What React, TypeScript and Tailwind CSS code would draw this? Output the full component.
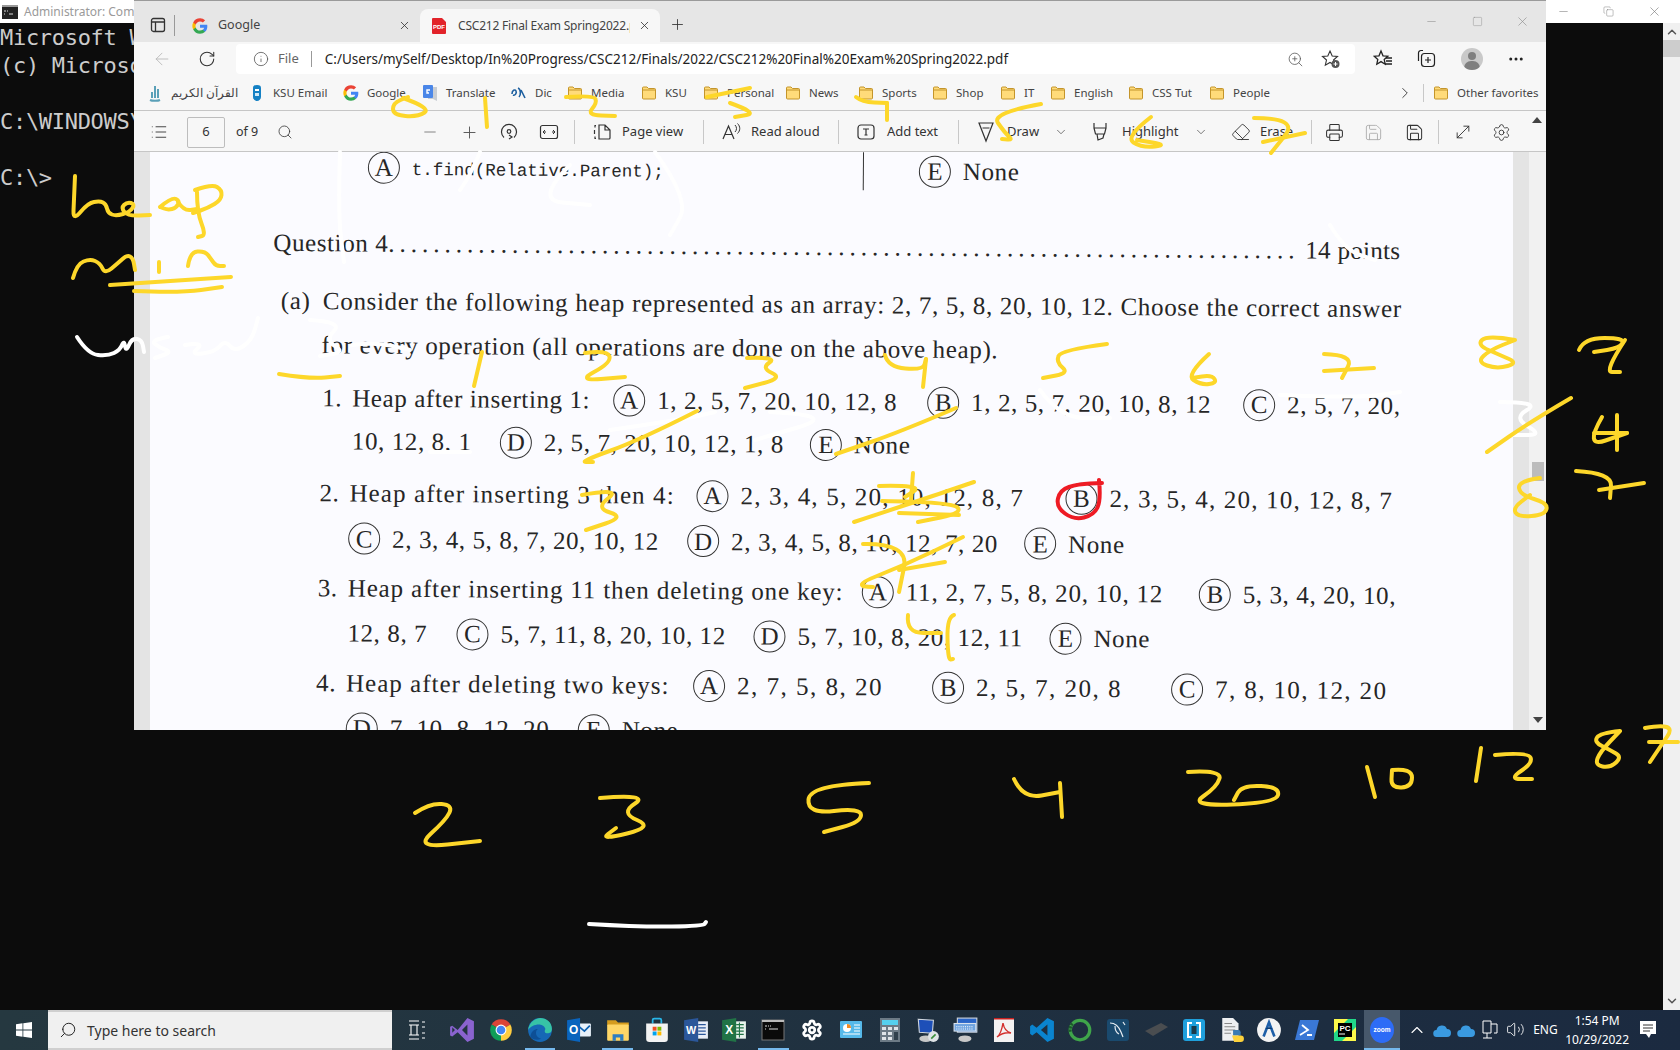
import type { ReactNode } from 'react';
import {
  ArrowLeft,
  ChevronDown,
  ChevronRight,
  ChevronUp,
  Copy,
  Ellipsis,
  Eraser,
  Info,
  List,
  Minus,
  MoveDiagonal,
  Plus,
  Printer,
  RotateCw,
  Save,
  Search,
  Settings,
  Square,
  Volume2,
  X,
  ZoomIn,
} from 'lucide-react';

type Pt = [number, number];

// handwriting on the shared screen, in page coordinates
const yellowStrokes: Pt[][] = [
  // heap
  [[75, 176], [74, 200], [73, 221], [88, 203], [100, 201], [106, 204], [108, 213], [116, 216], [130, 212], [135, 204], [127, 202], [121, 208], [128, 216], [150, 215]],
  [[160, 207], [172, 197], [180, 201], [176, 208], [168, 210], [160, 207]],
  [[178, 202], [184, 211], [197, 209]],
  [[195, 190], [212, 184], [222, 190], [221, 200], [208, 208], [193, 213]],
  [[197, 192], [197, 212], [206, 235], [198, 237]],
  // min
  [[73, 278], [77, 264], [90, 259], [100, 263], [105, 274], [118, 263], [127, 255], [133, 258], [135, 270]],
  [[159, 262], [159, 272]],
  [[188, 266], [190, 252], [205, 251], [211, 259], [216, 266], [224, 266]],
  [[110, 285], [170, 281], [231, 277]],
  [[134, 291], [180, 293], [222, 287]],
  [[279, 374], [310, 379], [340, 376]],
  // 0 to 7 over the toolbar
  [[403, 98], [431, 108], [418, 117], [393, 115], [393, 103], [408, 97]],
  [[485, 98], [487, 127]],
  [[566, 97], [594, 95], [597, 103], [587, 115], [615, 116]],
  [[707, 97], [750, 88]],
  [[730, 103], [758, 113], [735, 117]],
  [[856, 97], [862, 102], [887, 103]],
  [[887, 103], [887, 120]],
  [[1041, 104], [991, 113], [1005, 133], [1013, 140], [1002, 139]],
  [[1151, 117], [1125, 137], [1142, 148], [1168, 145], [1137, 140]],
  [[1254, 118], [1299, 118], [1271, 153]],
  [[1263, 142], [1305, 133]],
  // 1 to 9 above the list
  [[482, 352], [474, 386]],
  [[585, 353], [608, 350], [611, 363], [577, 381], [625, 377]],
  [[747, 358], [778, 357], [761, 368], [783, 378], [745, 388]],
  [[885, 355], [888, 367], [923, 370], [926, 359]],
  [[926, 359], [923, 387]],
  [[1107, 344], [1061, 350], [1056, 362], [1069, 373], [1043, 378]],
  [[1209, 354], [1186, 375], [1201, 385], [1217, 383], [1212, 375], [1192, 378]],
  [[1324, 354], [1354, 355], [1342, 378]],
  [[1324, 371], [1374, 368]],
  [[1515, 340], [1487, 335], [1477, 345], [1500, 355], [1518, 363], [1497, 369], [1477, 362], [1490, 350], [1515, 340]],
  [[1579, 350], [1584, 338], [1625, 338], [1620, 348], [1594, 352]],
  [[1625, 340], [1604, 372], [1620, 372]],
  // strikes
  [[1571, 398], [1530, 422], [1487, 452]],
  [[1602, 417], [1584, 448], [1627, 433]],
  [[1594, 433], [1627, 433]],
  [[1617, 415], [1617, 450]],
  [[1540, 478], [1518, 481], [1520, 495], [1548, 503], [1545, 515], [1518, 517], [1513, 508], [1530, 495]],
  [[1576, 471], [1612, 473], [1610, 498]],
  [[1599, 490], [1644, 483]],
  [[697, 411], [640, 440], [579, 462], [593, 462]],
  [[956, 408], [900, 432], [836, 454]],
  [[582, 495], [622, 488], [595, 508], [625, 517], [586, 530]],
  [[879, 486], [923, 485], [905, 497]],
  [[913, 473], [911, 500]],
  [[854, 522], [915, 502], [974, 482]],
  [[882, 501], [952, 502], [963, 513], [918, 522]],
  [[899, 513], [959, 515]],
  [[863, 544], [909, 543], [899, 592]],
  [[873, 587], [849, 587], [905, 565], [963, 537]],
  [[899, 570], [945, 562]],
  [[908, 615], [906, 633], [941, 633]],
  [[954, 615], [947, 617], [948, 660], [953, 659]],
  // numbers on the black part
  [[415, 813], [430, 803], [453, 805], [446, 820], [415, 848], [480, 841]],
  [[600, 798], [650, 794], [620, 813], [654, 827], [600, 840], [616, 828]],
  [[869, 783], [810, 785], [807, 814], [861, 808], [861, 822], [824, 832]],
  [[1014, 779], [1023, 799], [1060, 792]],
  [[1060, 783], [1062, 817]],
  [[1188, 772], [1222, 770], [1217, 787], [1189, 806], [1276, 803], [1280, 787], [1242, 785], [1234, 800]],
  [[1367, 767], [1375, 797]],
  [[1392, 770], [1412, 768], [1412, 787], [1391, 788], [1392, 770]],
  [[1481, 748], [1476, 781]],
  [[1495, 755], [1528, 752], [1533, 763], [1509, 779], [1532, 779]],
  [[1620, 731], [1600, 733], [1594, 742], [1610, 750], [1622, 757], [1610, 768], [1595, 765], [1600, 752], [1620, 731]],
  [[1645, 728], [1677, 722], [1658, 750], [1650, 762]],
  [[1649, 742], [1678, 742]],
];

const whiteStrokes: Pt[][] = [
  [[77, 337], [88, 354], [108, 356], [120, 350], [124, 340], [126, 352], [132, 338], [142, 340], [144, 352]],
  [[168, 337], [150, 340], [160, 348], [172, 352], [155, 358]],
  [[185, 345], [205, 342], [190, 355], [215, 352], [225, 340], [235, 352], [252, 340], [258, 318]],
  [[310, 320], [343, 322], [325, 340], [345, 352], [320, 356]],
  [[589, 924], [640, 927], [703, 926], [706, 922]],
  [[1500, 402], [1541, 402], [1513, 418], [1543, 435], [1513, 435]],
  // faint strokes that rub out bits of the print
  [[340, 152], [338, 215], [344, 262]],
  [[480, 152], [470, 175], [460, 190]],
  [[570, 165], [535, 200], [590, 205]],
  [[655, 152], [690, 200], [670, 235]],
  [[1330, 225], [1345, 250], [1375, 260]],
  [[352, 345], [375, 342], [410, 350]],
  [[430, 452], [470, 452]],
  [[610, 430], [680, 420], [715, 412]],
  [[770, 412], [840, 415], [755, 440]],
  [[1040, 390], [1060, 418], [1110, 418]],
  [[1280, 395], [1360, 398], [1400, 392]],
];

// midpoint smoothing so the polylines read as pen strokes
function smooth(pts: Pt[]) {
  let d = `M${pts[0][0]} ${pts[0][1]}`;
  for (let i = 1; i < pts.length - 1; i++) {
    const mx = (pts[i][0] + pts[i + 1][0]) / 2;
    const my = (pts[i][1] + pts[i + 1][1]) / 2;
    d += ` Q${pts[i][0]} ${pts[i][1]} ${mx} ${my}`;
  }
  const last = pts[pts.length - 1];
  return `${d} L${last[0]} ${last[1]}`;
}

function GoogleG({ size = 16 }: { size?: number }) {
  return (
    <svg width={size} height={size} viewBox="0 0 24 24" className="shrink-0">
      <path fill="#4285f4" d="M23 12.3c0-.8-.1-1.6-.2-2.3H12v4.5h6.2a5.3 5.3 0 0 1-2.3 3.4v2.9h3.7c2.2-2 3.4-5 3.4-8.5z" />
      <path fill="#34a853" d="M12 23.5c3.1 0 5.7-1 7.6-2.8l-3.7-2.9c-1 .7-2.3 1.1-3.9 1.1-3 0-5.5-2-6.4-4.7H1.8v3A11.500 11.500 0 0 0 12 23.500z" />
      <path fill="#fbbc05" d="M5.600 14.200a7 7 0 0 1 0-4.400v-3H1.800a11.500 11.500 0 0 0 0 10.400z" />
      <path fill="#ea4335" d="M12 5.100c1.700 0 3.200.6 4.400 1.700l3.300-3.300A11 11 0 0 0 12 .5 11.500 11.500 0 0 0 1.800 6.800l3.800 3c.9-2.700 3.400-4.700 6.400-4.700z" />
    </svg>
  );
}

function Folder() {
  return (
    <svg width="16" height="16" viewBox="0 0 16 16" className="shrink-0">
      <path d="M1.500 3a1 1 0 0 1 1-1h3.500l1.500 1.500h6a1 1 0 0 1 1 1v8.500a1 1 0 0 1-1 1h-11a1 1 0 0 1-1-1z" fill="#ffdb7a" stroke="#c4952b" />
      <path d="M1.500 5h13" stroke="#c4952b" />
    </svg>
  );
}

const bookmarks: { label: string; className: string; icon: ReactNode }[] = [
  {
    label: 'القرآن الكريم',
    className: 'w-[102px]',
    icon: (
      <svg width="16" height="18" viewBox="0 0 16 18">
        <path d="M3 16c2 1 8 1 10 0M8 2v12M11 5v9M5 8v6" stroke="#5aa0b8" strokeWidth="2" fill="none" />
      </svg>
    ),
  },
  {
    label: 'KSU Email',
    className: 'w-[94px]',
    icon: (
      <svg width="16" height="18" viewBox="0 0 16 18">
        <path d="M8 1c3 0 4 1 4 3v9c0 2-2 4-4 4s-4-2-4-4V4c0-2 1-3 4-3z" fill="#1581c4" />
        <rect x="6" y="5" width="4" height="2" fill="#fff" />
        <rect x="6" y="9" width="4" height="3" fill="#cfe8f7" />
      </svg>
    ),
  },
  { label: 'Google', className: 'w-[79px]', icon: <GoogleG /> },
  {
    label: 'Translate',
    className: 'w-[88px]',
    icon: (
      <svg width="16" height="18" viewBox="0 0 16 18">
        <path d="M6 3h9v14l-4-2H6z" fill="#c8cdd3" />
        <rect x="1" y="1" width="10" height="13" rx="1" fill="#4a86e8" />
        <path d="M8 6H5v3h2" stroke="#fff" fill="none" strokeWidth="1.400" />
      </svg>
    ),
  },
  {
    label: 'Dic',
    className: 'w-[57px]',
    icon: (
      <svg width="17" height="16" viewBox="0 0 17 16">
        <path d="M2 9c0-4 3-5 4-3s-1 5-3 4M8 3c3 1 3 7 1 9M11 5l4 8" stroke="#1d5f9f" strokeWidth="1.600" fill="none" />
      </svg>
    ),
  },
  { label: 'Media', className: 'w-[74px]', icon: <Folder /> },
  { label: 'KSU', className: 'w-[62px]', icon: <Folder /> },
  { label: 'Personal', className: 'w-[82px]', icon: <Folder /> },
  { label: 'News', className: 'w-[73px]', icon: <Folder /> },
  { label: 'Sports', className: 'w-[74px]', icon: <Folder /> },
  { label: 'Shop', className: 'w-[68px]', icon: <Folder /> },
  { label: 'IT', className: 'w-[50px]', icon: <Folder /> },
  { label: 'English', className: 'w-[78px]', icon: <Folder /> },
  { label: 'CSS Tut', className: 'w-[81px]', icon: <Folder /> },
  { label: 'People', className: 'w-[187px]', icon: <Folder /> },
];

const thin = 'text-[#333] shrink-0';

function Divider({ className }: { className: string }) {
  return <div className={`w-px h-[24px] bg-[#c8c8c8] shrink-0 ${className}`} />;
}

function TopTabs() {
  return (
    <div className="flex h-[41px] bg-[#e6e6e6] shrink-0">
      <svg width="16" height="16" viewBox="0 0 16 16" className="ml-[16px] mt-[16px] shrink-0">
        <rect x="1.500" y="1.500" width="13" height="13" rx="2" fill="none" stroke="#333" strokeWidth="1.300" />
        <path d="M1.500 5h13M5.500 5v9.500" stroke="#333" strokeWidth="1.300" />
      </svg>
      <div className="w-px h-[21px] bg-[#999] ml-[8px] mt-[14px]" />
      <div className="flex items-center w-[245px] pl-[17px] mt-[8px] h-[33px]">
        <GoogleG />
        <span className="ml-[10px] text-[12.500px] text-[#444]">Google</span>
        <X size={13} strokeWidth={1.500} className="text-[#333] ml-auto mr-[9px]" />
      </div>
      <div className="flex items-center w-[240px] h-[33px] mt-[8px] pl-[11px] bg-[#f7f7f7] rounded-t-lg">
        <svg width="16" height="18" viewBox="0 0 16 18" className="shrink-0">
          <path d="M1 2a1 1 0 0 1 1-1h9l4 4v11a1 1 0 0 1-1 1H2a1 1 0 0 1-1-1z" fill="#e2232a" />
          <text x="8" y="12" textAnchor="middle" fontSize="6" fontWeight="700" fill="#fff" fontFamily="Liberation Sans, sans-serif">PDF</text>
        </svg>
        <span className="ml-[11px] w-[172px] text-[12px] tracking-[-0.2px] text-[#444] whitespace-nowrap overflow-hidden">CSC212 Final Exam Spring2022.pdf</span>
        <X size={13} strokeWidth={1.500} className="text-[#333] ml-[8px]" />
      </div>
      <Plus size={17} strokeWidth={1.200} className="text-[#333] ml-[9px] mt-[15px]" />
      <Minus size={13} strokeWidth={1} className="text-[#8a8a8a] ml-[739px] mt-[14px]" />
      <Square size={11} strokeWidth={1} className="text-[#8a8a8a] ml-[34px] mt-[15px]" />
      <X size={15} strokeWidth={1} className="text-[#8a8a8a] ml-[32px] mt-[13px]" />
    </div>
  );
}

function AddressRow() {
  return (
    <div className="flex items-center h-[34px] bg-[#f7f7f7] shrink-0">
      <ArrowLeft size={20} strokeWidth={1} className="text-[#b5b5b5] ml-[18px] shrink-0" />
      <RotateCw size={18} strokeWidth={1.400} className={`${thin} ml-[26px]`} />
      <div className="flex items-center w-[1119px] h-[30px] ml-[20px] bg-white rounded-[4px] text-[14px] shrink-0">
        <Info size={16} strokeWidth={1.200} className="text-[#555] ml-[17px] shrink-0" />
        <span className="ml-[9px] text-[#666] text-[13px]">File</span>
        <div className="w-px h-[16px] bg-[#999] ml-[12px]" />
        <span className="ml-[13px] text-[#222] text-[13.500px] whitespace-nowrap">C:/Users/mySelf/Desktop/In%20Progress/CSC212/Finals/2022/CSC212%20Final%20Exam%20Spring2022.pdf</span>
        <ZoomIn size={17} strokeWidth={1.100} className="text-[#555] ml-auto shrink-0" />
        <svg width="20" height="20" viewBox="0 0 20 20" className="ml-[17px] mr-[14px] shrink-0">
          <path d="M9 2l2.200 5 5.300.5-4 3.500 1.200 5.200L9 13.500l-4.700 2.700L5.500 11l-4-3.500L6.800 7z" fill="none" stroke="#333" strokeWidth="1.100" />
          <circle cx="14.500" cy="15" r="4" fill="#555" />
          <path d="M14.500 13v4M12.500 15h4" stroke="#fff" />
        </svg>
      </div>
      <svg width="20" height="20" viewBox="0 0 20 20" className="ml-[18px] shrink-0">
        <path d="M8 2l2 4.800 4.800.4-3.600 3.200 1 4.800L8 12.600l-4.200 2.600 1-4.800L1.200 7.200 6 6.800z" fill="none" stroke="#222" strokeWidth="1.300" />
        <path d="M13 9h6M13 12h6M12 15h7" stroke="#222" strokeWidth="1.300" />
      </svg>
      <svg width="20" height="20" viewBox="0 0 20 20" className="ml-[24px] shrink-0">
        <path d="M6 1.500H4A2.500 2.500 0 0 0 1.500 4v8" fill="none" stroke="#222" strokeWidth="1.200" />
        <rect x="4.500" y="4.500" width="13" height="13" rx="3" fill="none" stroke="#222" strokeWidth="1.200" />
        <path d="M11 8v6M8 11h6" stroke="#222" strokeWidth="1.200" />
      </svg>
      <div className="w-[22px] h-[22px] rounded-full bg-[#c9c9c9] ml-[24px] shrink-0 flex flex-col items-center overflow-hidden">
        <div className="w-[8px] h-[8px] rounded-full bg-[#7f7f7f] mt-[4px] shrink-0" />
        <div className="w-[16px] h-[14px] rounded-full bg-[#7f7f7f] mt-[1px] shrink-0" />
      </div>
      <Ellipsis size={18} strokeWidth={2} className="text-[#222] ml-[24px] shrink-0" />
    </div>
  );
}

function BookmarkRow() {
  return (
    <div className="flex items-center h-[35px] pl-[13px] bg-[#f7f7f7] border-b border-[#c6c6c6] shrink-0 text-[11.500px] text-[#444]">
      {bookmarks.map((b) => (
        <div key={b.label} className={`flex items-center shrink-0 gap-[8px] ${b.className}`}>
          {b.icon}
          <span className="whitespace-nowrap">{b.label}</span>
        </div>
      ))}
      <ChevronRight size={18} strokeWidth={1.200} className="text-[#333] shrink-0" />
      <div className="w-px h-[18px] bg-[#c8c8c8] ml-[9px] shrink-0" />
      <div className="flex items-center gap-[8px] ml-[9px] shrink-0">
        <Folder />
        <span className="whitespace-nowrap">Other favorites</span>
      </div>
    </div>
  );
}

function PdfToolbar() {
  const label = 'text-[13px] text-[#333] whitespace-nowrap shrink-0';
  const icon = 'text-[#333] shrink-0';
  return (
    <div className="flex items-center h-[41px] pl-[16px] pt-[2px] bg-[#f7f7f7] border-b border-[#c6c6c6] shrink-0">
      <List size={18} strokeWidth={1.200} className={icon} />
      <div className="flex items-center justify-center w-[38px] h-[31px] ml-[19px] border border-[#bdbdbd] rounded-[2px] text-[13px] text-[#333] shrink-0">6</div>
      <span className="ml-[11px] w-[30px] text-[12.500px] text-[#333] shrink-0">of 9</span>
      <Search size={16} strokeWidth={1.200} className={`${icon} ml-[11px]`} />
      <Minus size={18} strokeWidth={1.200} className="text-[#777] shrink-0 ml-[128px]" />
      <Plus size={19} strokeWidth={1.200} className="text-[#555] shrink-0 ml-[21px]" />
      <svg width="20" height="20" viewBox="0 0 20 20" className="ml-[20px] shrink-0">
        <path d="M15 15.500A7.500 7.500 0 1 0 5 15.500" fill="none" stroke="#333" strokeWidth="1.200" />
        <path d="M10 17l3-2-3-2" fill="none" stroke="#333" strokeWidth="1.200" />
        <circle cx="10" cy="9.500" r="1.800" fill="none" stroke="#333" strokeWidth="1.200" />
      </svg>
      <svg width="20" height="16" viewBox="0 0 20 16" className="ml-[20px] shrink-0">
        <rect x="1.500" y="1.500" width="17" height="13" rx="2" fill="none" stroke="#333" strokeWidth="1.200" />
        <path d="M4 8h3M13 8h3M6 6L4 8l2 2M14 6l2 2-2 2" fill="none" stroke="#333" />
      </svg>
      <Divider className="ml-[15px]" />
      <svg width="20" height="20" viewBox="0 0 20 20" className="ml-[17px] shrink-0">
        <path d="M7 3h6l5 5v8a1 1 0 0 1-1 1H7zM13 3v5h5M4 3.500H3v2M2.500 8v4M3 14.500V16.500h1" fill="none" stroke="#333" strokeWidth="1.200" />
      </svg>
      <span className={`${label} ml-[10px] w-[62px]`}>Page view</span>
      <Divider className="ml-[19px]" />
      <svg width="20" height="20" viewBox="0 0 20 20" className="ml-[17px] shrink-0">
        <path d="M2 17L7.500 4 13 17M4 12.500h7" fill="none" stroke="#333" strokeWidth="1.200" />
        <path d="M14 3c2 2 2 5 0 7M16.500 1.500c3 3 3 7 0 10" fill="none" stroke="#333" />
      </svg>
      <span className={`${label} ml-[10px] w-[69px]`}>Read aloud</span>
      <Divider className="ml-[18px]" />
      <svg width="20" height="20" viewBox="0 0 20 20" className="ml-[17px] shrink-0">
        <rect x="2" y="3" width="16" height="14" rx="3" fill="none" stroke="#333" strokeWidth="1.200" />
        <path d="M7 7h6M10 7v6M8.500 13h3" fill="none" stroke="#333" strokeWidth="1.200" />
      </svg>
      <span className={`${label} ml-[11px] w-[52px]`}>Add text</span>
      <Divider className="ml-[19px]" />
      <svg width="20" height="22" viewBox="0 0 20 22" className="ml-[17px] shrink-0">
        <path d="M3 2h14L10 20zM6.500 7h7" fill="none" stroke="#333" strokeWidth="1.200" />
      </svg>
      <span className={`${label} ml-[11px] w-[31px]`}>Draw</span>
      <ChevronDown size={14} strokeWidth={1.100} className={`${icon} ml-[16px]`} />
      <svg width="20" height="22" viewBox="0 0 20 22" className="ml-[22px] shrink-0">
        <path d="M4 2v5h12V2M4 7l1.500 6h9L16 7M7 13l1 6 5-2 1-4" fill="none" stroke="#333" strokeWidth="1.200" />
      </svg>
      <span className={`${label} ml-[12px] w-[56px]`}>Highlight</span>
      <ChevronDown size={14} strokeWidth={1.100} className={`${icon} ml-[16px]`} />
      <Eraser size={20} strokeWidth={1.100} className={`${icon} ml-[23px]`} />
      <span className={`${label} ml-[9px] w-[32px]`}>Erase</span>
      <Divider className="ml-[19px]" />
      <Printer size={19} strokeWidth={1.300} className={`${icon} ml-[13px]`} />
      <Save size={19} strokeWidth={1.100} className="text-[#aaa] shrink-0 ml-[20px]" />
      <Save size={19} strokeWidth={1.300} className={`${icon} ml-[22px]`} />
      <Divider className="ml-[14px]" />
      <MoveDiagonal size={20} strokeWidth={1.100} className={`${icon} ml-[14px]`} />
      <Settings size={19} strokeWidth={1.100} className={`${icon} ml-[19px]`} />
      <svg width="10" height="6" viewBox="0 0 10 6" className="ml-[21px] -mt-[24px] shrink-0">
        <path d="M5 0l5 6H0z" fill="#444" />
      </svg>
    </div>
  );
}

function Circled({ c, className = '' }: { c: string; className?: string }) {
  return (
    <span className={`flex items-center justify-center w-[32px] h-[32px] rounded-full border border-[#333] tracking-normal shrink-0 ${className}`}>{c}</span>
  );
}

function Opt({ c, text, className = '', textClass = '' }: { c: string; text: string; className?: string; textClass?: string }) {
  return (
    <div className={`flex items-center shrink-0 ${className}`}>
      <Circled c={c} />
      <span className={`ml-[12px] whitespace-nowrap ${textClass}`}>{text}</span>
    </div>
  );
}

function Row({ className, children }: { className: string; children: ReactNode }) {
  return <div className={`flex items-center h-[40px] shrink-0 whitespace-nowrap ${className}`}>{children}</div>;
}

function ExamPage() {
  return (
    <div className="flex-1 overflow-hidden bg-[#fbfbff]">
      <div className="flex flex-col origin-top-left rotate-[0.42deg] w-[1380px] text-[25px] tracking-[0.6px] text-[#262626] font-['Liberation_Serif',serif]">
        <Row className="-mt-[6.500px] pl-[218px]">
          <Circled c="A" />
          <span className="ml-[12px] mt-[6px] text-[17.500px] tracking-normal font-['Liberation_Mono',monospace]">t.find(Relative.Parent);</span>
          <div className="w-px h-[38px] bg-[#333] ml-[199px]" />
          <Opt c="E" text="None" className="ml-[55px]" />
        </Row>
        <Row className="mt-[36.500px] pl-[124px]">
          <span>Question 4</span>
          <span className="w-[911px] overflow-hidden tracking-[5px]">{'.'.repeat(90)}</span>
          <span className="ml-[6px] tracking-[0.3px]">14 points</span>
        </Row>
        <Row className="mt-[18px] pl-[132px]">
          <span className="w-[42px]">(a)</span>
          <span className="tracking-[0.675px]">Consider the following heap represented as an array: 2, 7, 5, 8, 20, 10, 12. Choose the correct answer</span>
        </Row>
        <Row className="mt-[3.500px] pl-[173px] tracking-[0.650px]">for every operation (all operations are done on the above heap).</Row>
        <Row className="mt-[13px] pl-[174px]">
          <span className="w-[30px]">1.</span>
          <span className="w-[261px]">Heap after inserting 1:</span>
          <Opt c="A" text="1, 2, 5, 7, 20, 10, 12, 8" className="w-[314px]" />
          <Opt c="B" text="1, 2, 5, 7, 20, 10, 8, 12" className="w-[316px]" />
          <Opt c="C" text="2, 5, 7, 20," />
        </Row>
        <Row className="mt-[3.500px] pl-[204px]">
          <span className="w-[148px]">10, 12, 8, 1</span>
          <Opt c="D" text="2, 5, 7, 20, 10, 12, 1, 8" className="w-[310px]" />
          <Opt c="E" text="None" />
        </Row>
        <Row className="mt-[12px] pl-[172px]">
          <span className="w-[30px]">2.</span>
          <span className="w-[347px] tracking-[1.100px]">Heap after inserting 3 then 4:</span>
          <Opt c="A" text="2, 3, 4, 5, 20, 10, 12, 8, 7" className="w-[369px]" textClass="tracking-[1.200px]" />
          <Opt c="B" text="2, 3, 5, 4, 20, 10, 12, 8, 7" textClass="tracking-[1.200px]" />
        </Row>
        <Row className="mt-[5.400px] pl-[201px]">
          <Opt c="C" text="2, 3, 4, 5, 8, 7, 20, 10, 12" className="w-[339px]" />
          <Opt c="D" text="2, 3, 4, 5, 8, 10, 12, 7, 20" className="w-[337px]" />
          <Opt c="E" text="None" />
        </Row>
        <Row className="mt-[9.600px] pl-[171px]">
          <span className="w-[30px]">3.</span>
          <span className="w-[514px] tracking-[0.850px]">Heap after inserting 11 then deleting one key:</span>
          <Opt c="A" text="11, 2, 7, 5, 8, 20, 10, 12" className="w-[337px]" textClass="tracking-[0.800px]" />
          <Opt c="B" text="5, 3, 4, 20, 10," />
        </Row>
        <Row className="mt-[4.700px] pl-[201px]">
          <span className="w-[109px]">12, 8, 7</span>
          <Opt c="C" text="5, 7, 11, 8, 20, 10, 12" className="w-[297px]" />
          <Opt c="D" text="5, 7, 10, 8, 20, 12, 11" className="w-[296px]" />
          <Opt c="E" text="None" />
        </Row>
        <Row className="mt-[10.100px] pl-[170px]">
          <span className="w-[30px]">4.</span>
          <span className="w-[347px] tracking-[1px]">Heap after deleting two keys:</span>
          <Opt c="A" text="2, 7, 5, 8, 20" className="w-[239px]" textClass="tracking-[1.500px]" />
          <Opt c="B" text="2, 5, 7, 20, 8" className="w-[239px]" textClass="tracking-[1.500px]" />
          <Opt c="C" text="7, 8, 10, 12, 20" textClass="tracking-[1.400px]" />
        </Row>
        <Row className="mt-[5.200px] pl-[200px]">
          <Opt c="D" text="7, 10, 8, 12, 20" className="w-[232px]" />
          <Opt c="E" text="None" />
        </Row>
      </div>
    </div>
  );
}

function Browser() {
  return (
    <div className="absolute left-[134px] top-0 w-[1412px] h-[730px] flex flex-col bg-[#e6e6e6] border-t border-[#9a9a9a] font-['Noto_Sans',sans-serif]">
      <TopTabs />
      <AddressRow />
      <BookmarkRow />
      <PdfToolbar />
      <div className="flex flex-1 min-h-0">
        <div className="w-[16px] bg-[#e4e4e4] shrink-0" />
        <ExamPage />
        <div className="w-[16px] bg-[#e4e4e4] shrink-0" />
        <div className="w-[17px] flex flex-col items-center bg-[#f1f1f1] shrink-0">
          <div className="w-[12px] h-[19px] mt-[310px] bg-[#bcbcbc] shrink-0" />
          <svg width="10" height="6" viewBox="0 0 10 6" className="mt-auto mb-[7px] shrink-0">
            <path d="M5 6L0 0h10z" fill="#444" />
          </svg>
        </div>
      </div>
    </div>
  );
}

function Terminal() {
  return (
    <div className="flex flex-1 min-h-0">
      <div className="flex-1 overflow-hidden pt-[1px] bg-[#0c0c0c] text-[#cccccc] text-[22px] leading-[28px] font-['DejaVu_Sans_Mono','Liberation_Mono',monospace] whitespace-pre tracking-[-0.3px]">
        <div>Microsoft Windows [Version 10.0.19044.2130]</div>
        <div>(c) Microsoft Corporation. All rights reserved.</div>
        <div>&nbsp;</div>
        <div>C:\WINDOWS\system32&gt;cd \</div>
        <div>&nbsp;</div>
        <div>C:\&gt;</div>
      </div>
      <div className="w-[17px] flex flex-col items-center bg-[#f0f0f0] shrink-0">
        <ChevronUp size={14} strokeWidth={2.500} className="text-[#555] mt-[2px] shrink-0" />
        <div className="w-full h-[17px] bg-[#cdcdcd] mt-[1px] shrink-0" />
        <ChevronDown size={14} strokeWidth={2.500} className="text-[#555] mt-auto mb-[2px] shrink-0" />
      </div>
    </div>
  );
}

const appIcons: { id: string; underline?: boolean; node: ReactNode }[] = [
  {
    id: 'vs',
    node: (
      <svg width="26" height="26" viewBox="0 0 24 24">
        <path d="M17 1l6 3v16l-6 3-9-9-5 4-2-1v-8l2-1 5 4zM17 7l-5 5 5 5zM3 9.500v5L5.500 12z" fill="#8a63cf" />
      </svg>
    ),
  },
  {
    id: 'chrome',
    node: (
      <svg width="26" height="26" viewBox="0 0 24 24">
        <path fill="#db4437" d="M12 12L3.340 7A10 10 0 0 1 20.660 7Z" />
        <path fill="#0f9d58" d="M12 12V22A10 10 0 0 1 3.340 7Z" />
        <path fill="#ffcd40" d="M12 12L20.660 7A10 10 0 0 1 12 22Z" />
        <circle cx="12" cy="12" r="5" fill="#fff" />
        <circle cx="12" cy="12" r="4" fill="#4285f4" />
      </svg>
    ),
  },
  {
    id: 'edge',
    underline: true,
    node: (
      <svg width="26" height="26" viewBox="0 0 24 24">
        <circle cx="12" cy="12" r="11" fill="#1668b5" />
        <path d="M1 12C2 4 9 1 12 1c6 0 11 4 11 10 0 3-2 4-4 4-3 0-3-2-2-4-1-3-4-4-6-4-4 0-8 2-10 5z" fill="#37c3a6" />
        <path d="M10 11c-3 2-2 8 3 9-3 2-8 1-10-2 1-5 4-7 7-7z" fill="#0d4f96" />
      </svg>
    ),
  },
  {
    id: 'outlook',
    node: (
      <svg width="26" height="26" viewBox="0 0 24 24">
        <rect x="10" y="6" width="13" height="12" rx="1" fill="#e8f1fa" />
        <path d="M11 8l6 5 5-5" fill="none" stroke="#0a5fb0" strokeWidth="1.500" />
        <path d="M1 3l12-2v22L1 21z" fill="#0a64bd" />
        <text x="7" y="16" textAnchor="middle" fontSize="11" fontWeight="700" fill="#fff" fontFamily="Liberation Sans, sans-serif">O</text>
      </svg>
    ),
  },
  {
    id: 'explorer',
    underline: true,
    node: (
      <svg width="26" height="26" viewBox="0 0 24 24">
        <path d="M2 3h8l2 2h10v3H2z" fill="#d59c1e" />
        <rect x="2" y="7" width="20" height="15" rx="1" fill="#ffd767" />
        <path d="M7 22v-6h10v6h-3v-3h-4v3z" fill="#2d7ec2" />
      </svg>
    ),
  },
  {
    id: 'store',
    node: (
      <svg width="26" height="26" viewBox="0 0 24 24">
        <path d="M8 6V3a1.500 1.500 0 0 1 1.500-1.500h5A1.500 1.500 0 0 1 16 3v3" fill="none" stroke="#29b6e8" strokeWidth="1.600" />
        <path d="M2 6h20v14a3 3 0 0 1-3 3H5a3 3 0 0 1-3-3z" fill="#f3f3f3" />
        <rect x="8" y="9" width="3.600" height="3.600" fill="#f25022" />
        <rect x="12.400" y="9" width="3.600" height="3.600" fill="#7fba00" />
        <rect x="8" y="13.400" width="3.600" height="3.600" fill="#00a4ef" />
        <rect x="12.400" y="13.400" width="3.600" height="3.600" fill="#ffb900" />
      </svg>
    ),
  },
  {
    id: 'word',
    node: (
      <svg width="26" height="26" viewBox="0 0 24 24">
        <rect x="12" y="4" width="11" height="16" fill="#e8eef8" />
        <path d="M14 7h7M14 10h7M14 13h7M14 16h7" stroke="#2b579a" />
        <path d="M1 3l13-2v22L1 21z" fill="#2b579a" />
        <text x="7.500" y="16" textAnchor="middle" fontSize="10" fontWeight="700" fill="#fff" fontFamily="Liberation Sans, sans-serif">W</text>
      </svg>
    ),
  },
  {
    id: 'excel',
    node: (
      <svg width="26" height="26" viewBox="0 0 24 24">
        <rect x="12" y="4" width="11" height="16" fill="#e8f3ec" />
        <path d="M14 7h7M14 10h7M14 13h7M14 16h7M17 5v14" stroke="#217346" />
        <path d="M1 3l13-2v22L1 21z" fill="#217346" />
        <text x="7.500" y="16" textAnchor="middle" fontSize="11" fontWeight="700" fill="#fff" fontFamily="Liberation Sans, sans-serif">X</text>
      </svg>
    ),
  },
  {
    id: 'cmd',
    underline: true,
    node: (
      <svg width="24" height="24" viewBox="0 0 24 24">
        <rect x="1" y="2" width="22" height="20" fill="#0a0a0a" stroke="#777" />
        <rect x="1" y="2" width="22" height="2" fill="#bbb" />
        <path d="M4 8h2M7 8h1M9 8h1M4 11h1M8 11h9" stroke="#ddd" />
      </svg>
    ),
  },
  {
    id: 'gear',
    node: <Settings size={22} strokeWidth={3} className="text-white" />,
  },
  {
    id: 'control',
    node: (
      <svg width="24" height="22" viewBox="0 0 24 22">
        <rect x="1" y="2" width="22" height="17" rx="1" fill="#56b9ea" />
        <circle cx="8" cy="9" r="4" fill="#fff" />
        <path d="M8 9V5a4 4 0 0 1 4 4z" fill="#f58a1f" />
        <path d="M15 6h6M15 9h6M15 12h6M4 15h17" stroke="#fff" />
      </svg>
    ),
  },
  {
    id: 'calc',
    node: (
      <svg width="22" height="26" viewBox="0 0 22 26">
        <rect x="1" y="1" width="20" height="24" fill="#6c7a85" />
        <rect x="3" y="3" width="16" height="5" fill="#55d0ee" />
        <path d="M3 10h4v3H3zM9 10h4v3H9zM15 10h4v3h-4zM3 15h4v3H3zM9 15h4v3H9zM3 20h4v3H3zM9 20h4v3H9z" fill="#dfe4e8" />
        <rect x="15" y="15" width="4" height="8" fill="#31414d" />
      </svg>
    ),
  },
  {
    id: 'rdp',
    node: (
      <svg width="26" height="26" viewBox="0 0 24 24">
        <path d="M3 2l14 1-1 12-12-1z" fill="#1d4fb8" stroke="#cfd6de" />
        <ellipse cx="10" cy="20" rx="6" ry="3" fill="#c8c8c8" />
        <circle cx="17" cy="18" r="5" fill="#dfe3e6" />
        <path d="M15 20l4-4" stroke="#3b8f3b" strokeWidth="1.500" />
      </svg>
    ),
  },
  {
    id: 'kbd',
    node: (
      <svg width="26" height="26" viewBox="0 0 24 24">
        <rect x="4" y="1" width="18" height="13" fill="#2a66c8" stroke="#cfd6de" />
        <rect x="1" y="6" width="20" height="7" fill="#6fa4e0" stroke="#d8e2ee" />
        <path d="M3 9h16M3 11h16" stroke="#fff" strokeDasharray="1 1" />
        <ellipse cx="11" cy="20" rx="6" ry="3" fill="#c8c8c8" />
      </svg>
    ),
  },
  {
    id: 'acrobat',
    node: (
      <svg width="24" height="26" viewBox="0 0 24 26">
        <rect x="2" y="1" width="20" height="24" fill="#f4f2f2" />
        <rect x="2" y="1" width="20" height="1.500" fill="#c8201f" />
        <path d="M5 20c3-2 5-8 6-14 1 6 4 9 8 10-5-1-9 0-14 4z" fill="none" stroke="#d3302d" strokeWidth="1.400" />
      </svg>
    ),
  },
  {
    id: 'code',
    node: (
      <svg width="26" height="26" viewBox="0 0 24 24">
        <path d="M17 1l6 3v16l-6 3-10-9-4 3-2-1.500v-7L3 7l4 3zM17 7l-6 5 6 5z" fill="#0a84cf" />
      </svg>
    ),
  },
  {
    id: 'ring',
    node: (
      <svg width="26" height="26" viewBox="0 0 24 24">
        <circle cx="12" cy="12" r="9" fill="none" stroke="#3fa54a" strokeWidth="3" />
        <path d="M5 6a9 9 0 0 0-2 8" fill="none" stroke="#1d5a2c" strokeWidth="3" strokeDasharray="2 1" />
      </svg>
    ),
  },
  {
    id: 'mysql',
    node: (
      <svg width="24" height="24" viewBox="0 0 24 24">
        <rect x="1" y="1" width="22" height="22" rx="3" fill="#1a4a6e" />
        <path d="M4 5c6 0 9 4 11 9l2 5M9 8c0 5 2 7 4 8M17 4l2 3" fill="none" stroke="#e8eef3" strokeWidth="1.200" />
      </svg>
    ),
  },
  {
    id: 'ssd',
    node: (
      <svg width="26" height="20" viewBox="0 0 26 20">
        <path d="M2 11L18 3l7 4-15 9z" fill="#4a4d50" />
      </svg>
    ),
  },
  {
    id: 'bracket',
    node: (
      <svg width="24" height="24" viewBox="0 0 24 24">
        <rect x="1" y="1" width="22" height="22" rx="3" fill="#1fa0dc" />
        <path d="M10 5H6v14h4M14 5h4v14h-4" fill="none" stroke="#fff" strokeWidth="2" />
        <rect x="9.500" y="8" width="5" height="8" fill="#1b3a4a" />
      </svg>
    ),
  },
  {
    id: 'pyfile',
    node: (
      <svg width="26" height="26" viewBox="0 0 24 24">
        <path d="M3 1h10l5 5v16H3z" fill="#eef0f2" />
        <path d="M5 6h7M5 9h10M5 12h10M5 15h6" stroke="#888" />
        <path d="M13 12h5a2 2 0 0 1 2 2v3h-7z" fill="#3b7bb3" />
        <path d="M12 17h8a3 3 0 0 1 3 3 3 3 0 0 1-3 3h-6z" fill="#fdd23b" />
      </svg>
    ),
  },
  {
    id: 'android',
    node: (
      <svg width="26" height="26" viewBox="0 0 24 24">
        <circle cx="12" cy="12" r="11" fill="#f3f3f3" />
        <path d="M7 18l5-13 5 13" fill="none" stroke="#1e5fa8" strokeWidth="2.400" />
        <path d="M8.500 11a5 5 0 0 1 7 0z" fill="#0b3c74" />
      </svg>
    ),
  },
  {
    id: 'powershell',
    node: (
      <svg width="26" height="24" viewBox="0 0 26 24">
        <path d="M6 2h19l-5 20H1z" fill="#3a78d6" />
        <path d="M8 7l6 5-8 5M13 17h5" fill="none" stroke="#fff" strokeWidth="1.800" />
      </svg>
    ),
  },
  {
    id: 'pycharm',
    node: (
      <svg width="24" height="24" viewBox="0 0 24 24">
        <rect x="1" y="1" width="22" height="22" fill="#21d789" />
        <path d="M1 1h14L1 15zM23 23H9l14-14z" fill="#fcf84a" />
        <rect x="5" y="5" width="14" height="14" fill="#000" />
        <text x="12" y="13" textAnchor="middle" fontSize="8" fontWeight="700" fill="#fff" fontFamily="Liberation Sans, sans-serif">PC</text>
        <rect x="6" y="15.500" width="6" height="1" fill="#fff" />
      </svg>
    ),
  },
];

function Taskbar() {
  return (
    <div className="flex h-[40px] shrink-0 text-white bg-gradient-to-r from-[#253840] to-[#1b2a40] font-['Noto_Sans',sans-serif]">
      <div className="flex items-center justify-center w-[48px] shrink-0">
        <svg width="16" height="16" viewBox="0 0 16 16">
          <path d="M0 2.200l6.500-.9v6.300H0zM7.300 1.200L16 0v7.600H7.300zM0 8.400h6.500v6.300L0 13.800zM7.300 8.400H16V16l-8.700-1.200z" fill="#fff" />
        </svg>
      </div>
      <div className="flex items-center w-[344px] bg-[#f0f0f0] border-t-2 border-b-2 border-[#cfcfcf] shrink-0">
        <Search size={18} strokeWidth={1.300} className="text-[#222] ml-[11px] -scale-x-100" />
        <span className="ml-[10px] text-[14px] text-[#333]">Type here to search</span>
      </div>
      <div className="flex items-center justify-center w-[50.800px] shrink-0">
        <svg width="18" height="20" viewBox="0 0 18 20">
          <path d="M1 1h10M1 5h10M1 15h10M1 19h10M3 5v10h6V5M14 2h3M14 7h3M14 13h3M14 18h3" fill="none" stroke="#fff" strokeWidth="1.100" />
        </svg>
      </div>
      {appIcons.map((app, i) => (
        <div key={app.id} className={`relative flex items-center justify-center shrink-0 ${i < 12 ? 'w-[38.900px]' : 'w-[37.900px]'}`}>
          {app.node}
          {app.underline && <div className="absolute bottom-0 left-[4px] right-[4px] h-[2px] bg-[#76b9ed]" />}
        </div>
      ))}
      <div className="relative flex items-center justify-center w-[36px] bg-[#47586b] shrink-0">
        <svg width="24" height="26" viewBox="0 0 24 26">
          <ellipse cx="12" cy="13" rx="12" ry="13" fill="#2d6cf6" />
          <text x="12" y="15" textAnchor="middle" fontSize="6.500" fontWeight="700" fill="#fff" fontFamily="Liberation Sans, sans-serif">zoom</text>
        </svg>
        <div className="absolute bottom-0 left-0 right-0 h-[2px] bg-[#76b9ed]" />
      </div>
      <ChevronUp size={20} strokeWidth={1.300} className="ml-[7px] mt-[10px] shrink-0" />
      <svg width="18" height="14" viewBox="0 0 18 14" className="ml-[6px] mt-[14px] shrink-0">
        <path d="M4 13a3.500 3.500 0 0 1-.5-7A5.500 5.500 0 0 1 14 5a4 4 0 0 1 0 8z" fill="#3a9ae0" />
      </svg>
      <svg width="18" height="14" viewBox="0 0 18 14" className="ml-[6px] mt-[14px] shrink-0">
        <path d="M4 13a3.500 3.500 0 0 1-.5-7A5.500 5.500 0 0 1 14 5a4 4 0 0 1 0 8z" fill="#3a9ae0" />
      </svg>
      <svg width="18" height="20" viewBox="0 0 18 20" className="ml-[6px] mt-[10px] shrink-0">
        <path d="M2 1h8v12H2zM10 4h6v9h-3M6 13v5M2 18h9" fill="none" stroke="#fff" />
      </svg>
      <Volume2 size={19} strokeWidth={1.100} className="ml-[7px] mt-[10px] shrink-0" />
      <span className="ml-[8px] mt-[11px] text-[12px] w-[26px] shrink-0">ENG</span>
      <div className="flex flex-col items-center justify-center w-[64px] ml-[6px] text-[12px] leading-[19px] shrink-0">
        <span>1:54 PM</span>
        <span>10/29/2022</span>
      </div>
      <svg width="20" height="20" viewBox="0 0 20 20" className="ml-[9px] mt-[10px] shrink-0">
        <path d="M2 1h16v13h-5l-2 4-3-4H2z" fill="#fff" />
        <path d="M5 5h10M5 8h10M5 11h7" stroke="#333" />
      </svg>
    </div>
  );
}

export default function App() {
  return (
    <div className="relative flex flex-col w-[1680px] h-[1050px] overflow-hidden bg-[#0c0c0c]">
      {/* console window, behind the browser */}
      <div className="flex items-center h-[23px] bg-white shrink-0 text-[12px] text-[#9a9a9a] font-['Noto_Sans',sans-serif]">
        <svg width="16" height="14" viewBox="0 0 16 14" className="ml-[2px] shrink-0">
          <rect width="16" height="14" fill="#222" />
          <rect width="16" height="2" fill="#999" />
          <path d="M2 6h2M5 6h1M2 9h1M7 9h4" stroke="#ddd" />
        </svg>
        <span className="ml-[6px]">Administrator: Command Prompt</span>
        <Minus size={13} strokeWidth={1} className="text-[#777] ml-auto" />
        <Copy size={11} strokeWidth={1} className="text-[#777] ml-[33px]" />
        <X size={15} strokeWidth={1} className="text-[#777] ml-[33px] mr-[18px]" />
      </div>
      <Terminal />
      <Taskbar />
      <Browser />
      <svg viewBox="0 0 1680 1050" className="absolute inset-0 w-[1680px] h-[1050px] pointer-events-none" fill="none" strokeLinecap="round" strokeLinejoin="round">
        {whiteStrokes.map((s, i) => (
          <path key={i} d={smooth(s)} stroke="#ffffff" strokeWidth="4" />
        ))}
        {yellowStrokes.map((s, i) => (
          <path key={i} d={smooth(s)} stroke="#fdd72a" strokeWidth="4" />
        ))}
        <path d={smooth([[1099, 480], [1101, 500], [1094, 515], [1074, 520], [1056, 507], [1060, 490], [1078, 484], [1102, 483]])} stroke="#ee1b24" strokeWidth="4" />
      </svg>
    </div>
  );
}
